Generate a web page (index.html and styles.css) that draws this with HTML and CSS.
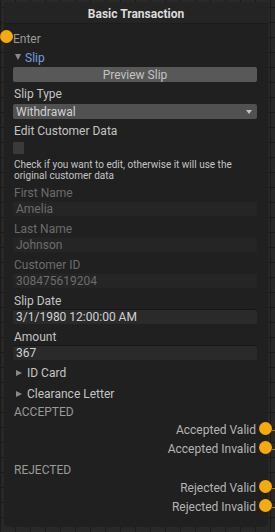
FILE: index.html
```html
<!DOCTYPE html>
<html>
<head>
<meta charset="utf-8">
<link rel="stylesheet" href="styles.css">
</head>
<body>
<div class="node">
  <div class="header">Basic Transaction</div>
  <div class="body">
    <div class="row port-in"><span class="port left"></span><span class="dim">Enter</span></div>
    <div class="row foldout open"><span class="tri down"></span><span class="blue">Slip</span></div>
    <div class="button">Preview Slip</div>
    <div class="row label">Slip Type</div>
    <div class="select"><span>Withdrawal</span><span class="arrow"></span></div>
    <div class="row label">Edit Customer Data</div>
    <div class="checkbox"></div>
    <div class="help">Check if you want to edit, otherwise it will use the original customer data</div>
    <div class="field disabled"><div class="row label">First Name</div><div class="input">Amelia</div></div>
    <div class="field disabled"><div class="row label">Last Name</div><div class="input">Johnson</div></div>
    <div class="field disabled"><div class="row label">Customer ID</div><div class="input">308475619204</div></div>
    <div class="field"><div class="row label">Slip Date</div><div class="input">3/1/1980 12:00:00 AM</div></div>
    <div class="field"><div class="row label">Amount</div><div class="input">367</div></div>
    <div class="row foldout f1"><span class="tri right"></span><span>ID Card</span></div>
    <div class="row foldout"><span class="tri right"></span><span>Clearance Letter</span></div>
    <div class="row section">ACCEPTED</div>
    <div class="row out"><span>Accepted Valid</span><span class="port right"></span></div>
    <div class="row out"><span>Accepted Invalid</span><span class="port right"></span></div>
    <div class="row section s2">REJECTED</div>
    <div class="row out"><span>Rejected Valid</span><span class="port right"></span></div>
    <div class="row out"><span>Rejected Invalid</span><span class="port right"></span></div>
  </div>
</div>
</body>
</html>
```
FILE: styles.css
```css
html, body {
  margin: 0;
  padding: 0;
}
body {
  width: 275px;
  height: 532px;
  overflow: hidden;
  background-color: #282828;
  background-image:
    linear-gradient(#1b1b1b 1px, transparent 1px),
    linear-gradient(90deg, #1b1b1b 1px, transparent 1px);
  background-size: 15px 15px;
  background-position: 0 7px;
  font-family: Roboto, "Noto Sans", sans-serif;
  font-size: 12px;
  color: #c4c4c4;
}
.node {
  margin: 2px 0 0 4px;
  width: 264px;
  height: 525px;
  background: #202020;
  border-radius: 5px;
  box-sizing: border-box;
}
.header {
  height: 21px;
  line-height: 25px;
  text-align: center;
  font-weight: bold;
  color: #dcdcdc;
  background: #242424;
  border-radius: 5px 5px 0 0;
  border-bottom: 1px solid #1c1c1c;
  overflow: hidden;
}
.body {
  padding: 4px 11px 0 9px;
  display: flex;
  flex-direction: column;
}
.row {
  height: 18px;
  line-height: 18px;
  box-sizing: border-box;
  padding-top: 4px;
  display: flex;
  align-items: center;
  white-space: nowrap;
  position: relative;
  flex-shrink: 0;
}
.label {
  padding-left: 1px;
  margin-top: 1px;
}
.dim {
  color: #9a9a9a;
}
.blue {
  color: #6f9fe0;
}
.port {
  display: block;
  width: 13px;
  height: 13px;
  border-radius: 50%;
  background: #f6aa0e;
  position: absolute;
}
.port.left {
  left: -13px;
  top: 2px;
}
.port.right {
  right: -15px;
  top: 3px;
}
.port.right::after {
  content: "";
  position: absolute;
  left: 13px;
  top: 8px;
  width: 4px;
  height: 1px;
  background: #b07a10;
}
.foldout {
  padding-left: 2px;
  gap: 4px;
}
.foldout.open {
  margin-top: 1px;
}
.tri {
  display: block;
  width: 0;
  height: 0;
}
.tri.down {
  margin-top: -2px;
  border-left: 3.5px solid transparent;
  border-right: 3.5px solid transparent;
  border-top: 6px solid #8a8a8a;
}
.tri.right {
  margin-left: 1px;
  margin-right: 1px;
  border-top: 3.5px solid transparent;
  border-bottom: 3.5px solid transparent;
  border-left: 6px solid #8a8a8a;
}
.foldout.f1 {
  margin-bottom: 3px;
}
.button {
  margin-top: 2px;
  height: 15px;
  line-height: 16px;
  background: #585858;
  border-radius: 2px;
  text-align: center;
  color: #c4c4c4;
  flex-shrink: 0;
}
.select {
  margin-top: 3px;
  height: 15px;
  line-height: 16px;
  background: #515151;
  border-radius: 2px;
  padding: 0 5px 0 3px;
  display: flex;
  justify-content: space-between;
  align-items: center;
  color: #d0d0d0;
  flex-shrink: 0;
}
.arrow {
  width: 0;
  height: 0;
  border-left: 3.5px solid transparent;
  border-right: 3.5px solid transparent;
  border-top: 4px solid #c4c4c4;
}
.checkbox {
  margin-top: 4px;
  width: 11px;
  height: 12px;
  background: #3a3a3a;
  border-radius: 1px;
  flex-shrink: 0;
}
.help {
  margin-top: 4px;
  padding-left: 1px;
  font-size: 10px;
  line-height: 11px;
  padding-top: 1px;
  box-sizing: border-box;
  color: #c4c4c4;
  height: 23px;
  flex-shrink: 0;
}
.field {
  display: flex;
  flex-direction: column;
  margin-bottom: 2px;
  flex-shrink: 0;
}
.field .label {
  margin-top: 0;
}
.help + .field .label {
  margin-top: 1px;
}
.input {
  margin-top: 1px;
  height: 15px;
  line-height: 15px;
  background: #2a2a2a;
  border-top: 1px solid #161616;
  box-sizing: border-box;
  border-radius: 2px;
  padding-left: 3px;
  color: #d2d2d2;
}
.field.disabled .label {
  color: #6c6c6c;
}
.field.disabled .input {
  background: #252525;
  border-top-color: #222;
  color: #6c6c6c;
}
.section {
  color: #9a9a9a;
  padding-left: 1px;
}
.section.s2 {
  margin-top: 3px;
}
.out {
  justify-content: flex-end;
  color: #b4b4b4;
  padding-right: 1px;
}
.out + .out {
  margin-top: 1px;
}
```
